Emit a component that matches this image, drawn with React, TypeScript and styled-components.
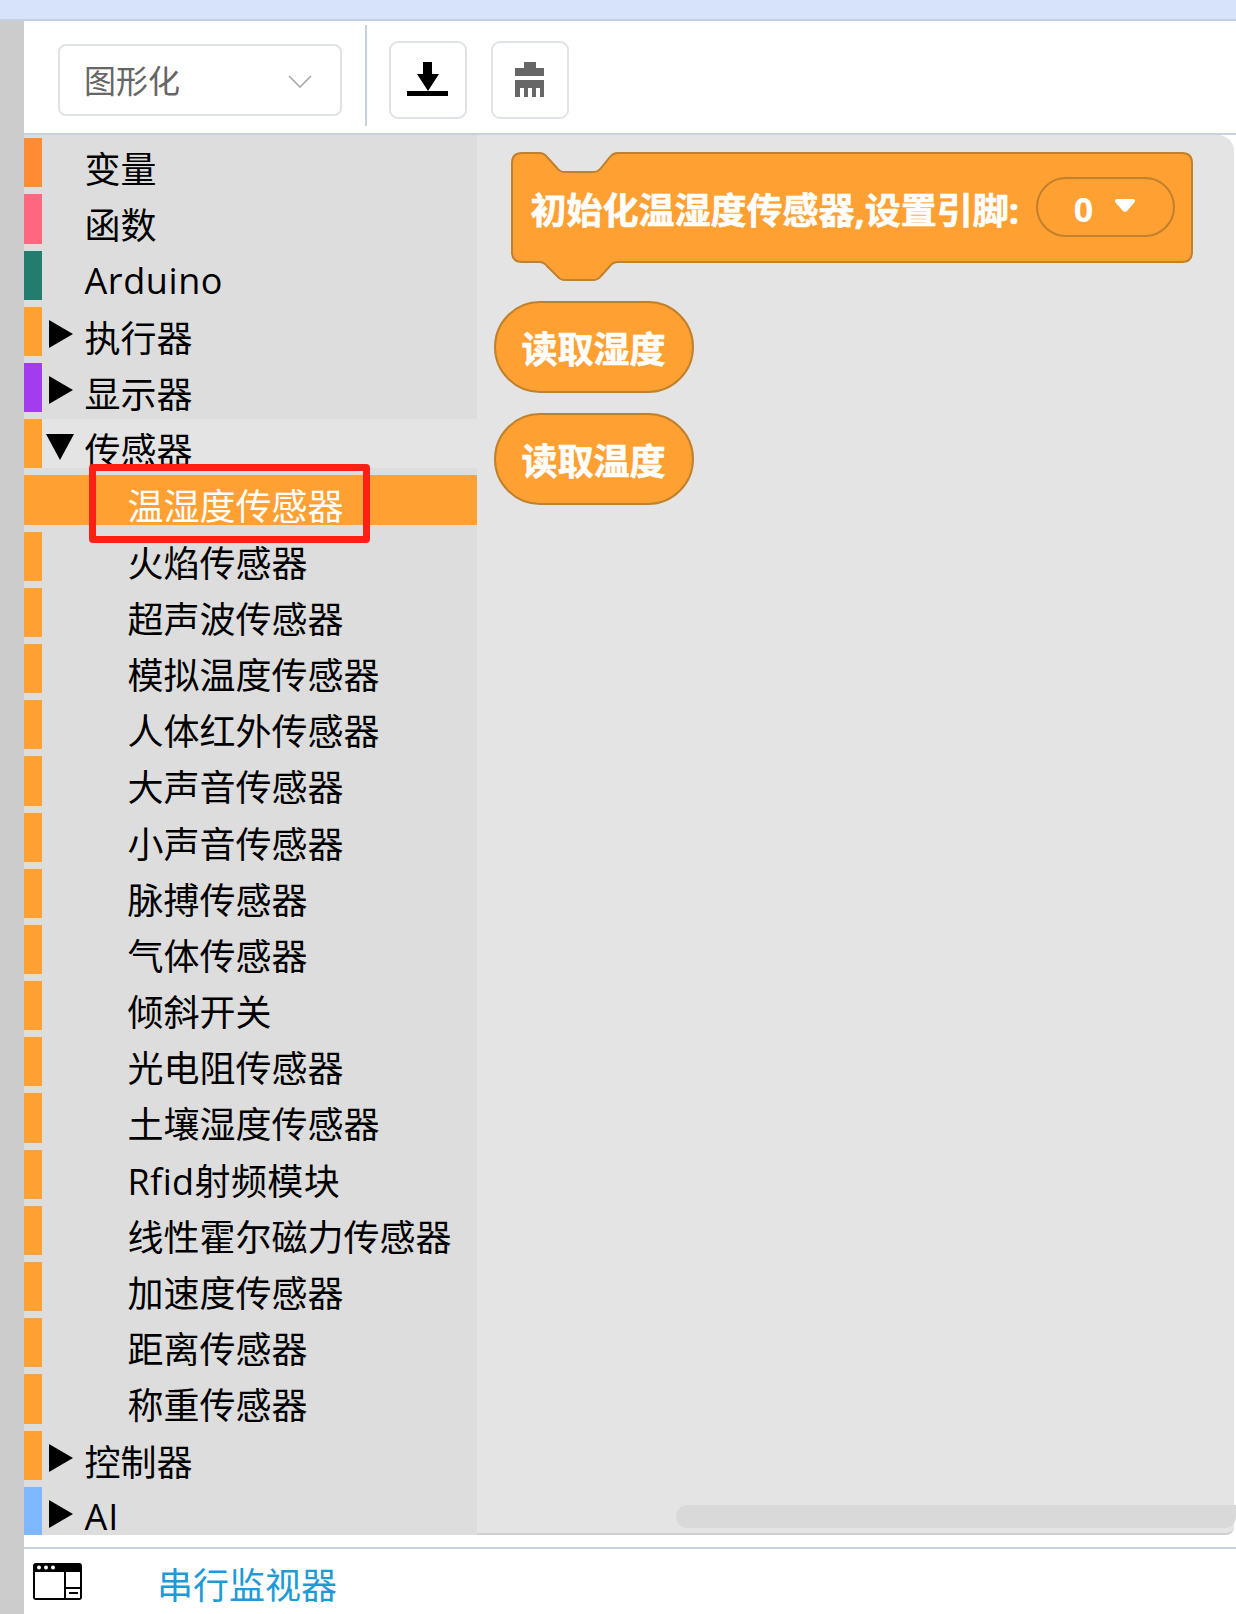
import React from 'react';
import styled, { createGlobalStyle } from 'styled-components';

const GlobalStyle = createGlobalStyle`
  html, body {
    margin: 0;
    padding: 0;
    background: white;
    font-family: 'Open Sans', 'Noto Sans CJK SC', sans-serif;
  }
`;

const palette = {
  control: '#ffa033',
  variable: '#ff8c33',
  func: '#ff6680',
  arduino: '#237d6e',
  display: '#a33cf0',
  ai: '#80b8ff',
  blockBorder: '#c1802c',
};

const Page = styled.div`
  width: 1236px;
  height: 1614px;
  display: flex;
  flex-direction: column;
  overflow: hidden;
`;

const TopBand = styled.div`
  height: 19px;
  flex: none;
  background: #d6e3fa;
  border-bottom: 2px solid #c5d1e2;
`;

const Body = styled.div`
  flex: 1;
  display: flex;
  min-height: 0;
`;

const Gutter = styled.div`
  width: 24px;
  flex: none;
  background: #cccccc;
`;

const Main = styled.div`
  flex: 1;
  display: flex;
  flex-direction: column;
  min-width: 0;
`;

const Toolbar = styled.div`
  height: 112px;
  flex: none;
  display: flex;
  align-items: flex-start;
  background: white;
  border-bottom: 2px solid #c8d2dc;
`;

const Select = styled.div`
  width: 284px;
  height: 72px;
  margin: 23px 0 0 34px;
  padding: 0 28px 0 24px;
  box-sizing: border-box;
  display: flex;
  align-items: center;
  justify-content: space-between;
  border: 2px solid #dfe3e8;
  border-radius: 8px;
  color: #666;
  font-size: 32px;
  line-height: 68px;
`;

const SelectLabel = styled.span`
  margin-top: 2px;
`;

const Divider = styled.div`
  width: 2px;
  height: 101px;
  margin: 4px 22px 0 23px;
  background: #c8d2dc;
`;

const ToolButton = styled.div`
  width: 78px;
  height: 78px;
  margin: 20px 24px 0 0;
  box-sizing: border-box;
  display: flex;
  align-items: center;
  justify-content: center;
  border: 2px solid #dfe3e8;
  border-radius: 9px;
`;

const Content = styled.div`
  height: 1400px;
  flex: none;
  display: flex;
`;

const Sidebar = styled.div`
  width: 453px;
  flex: none;
  padding-top: 3.3px;
  box-sizing: border-box;
  background: #dddddd;
  overflow: hidden;
  position: relative;
`;

const Row = styled.div<{ $bg?: string; $color?: string }>`
  height: 49.2px;
  margin-bottom: 7px;
  display: flex;
  position: relative;
  background: ${(p) => p.$bg || 'transparent'};
  color: ${(p) => p.$color || 'black'};
  font-size: 36px;
  line-height: 49px;
`;

const Strip = styled.div<{ $color: string }>`
  width: 18px;
  flex: none;
  background: ${(p) => p.$color};
`;

const Toggle = styled.div`
  width: 43px;
  flex: none;
  display: flex;
  align-items: flex-start;
  padding: 13px 0 0 6px;
  box-sizing: border-box;
`;

const Label = styled.div<{ $indent: boolean; $spacing?: number; $latin?: boolean }>`
  margin-left: ${(p) => (p.$indent ? '42.5px' : '-0.5px')};
  padding-top: ${(p) => (p.$latin ? 5 : 7)}px;
  white-space: nowrap;
  letter-spacing: ${(p) => p.$spacing || 0}px;
`;

const Highlight = styled.div`
  position: absolute;
  left: 65px;
  top: 329px;
  width: 281px;
  height: 79px;
  box-sizing: border-box;
  border: 7px solid #ff2015;
  border-radius: 4px;
`;

const Workspace = styled.div`
  flex: 1;
  position: relative;
  margin-right: 2px;
  padding: 17px 0 0 16.5px;
  box-sizing: border-box;
  display: flex;
  flex-direction: column;
  align-items: flex-start;
  background: #e4e4e4;
  border-bottom: 2px solid #cfcfcf;
  border-radius: 0 16px 8px 0;
  overflow: visible;
`;

const StackBlock = styled.div`
  position: relative;
  width: 683px;
  height: 130px;
  margin: 0 0 19px 17px;
  flex: none;
`;

const BlockShape = styled.svg`
  position: absolute;
  left: 0;
  top: 0;
`;

const BlockContent = styled.div`
  position: relative;
  height: 110px;
  padding: 0 0 0 20px;
  box-sizing: border-box;
  display: flex;
  align-items: center;
  gap: 17px;
`;

const BlockText = styled.div`
  color: white;
  font-weight: 700;
  font-size: 36px;
  white-space: nowrap;
  -webkit-text-stroke: 0.6px white;
`;

const StackText = styled(BlockText)`
  margin-top: 2px;
`;

const Field = styled.div`
  width: 139px;
  height: 60px;
  box-sizing: border-box;
  display: flex;
  align-items: center;
  justify-content: center;
  gap: 20px;
  border: 2px solid ${palette.blockBorder};
  border-radius: 30px;
  color: white;
  font-weight: 700;
  font-size: 34px;
  font-family: 'Open Sans', sans-serif;
`;

const FieldValue = styled.span`
  margin-top: 4px;
`;

const FieldCaret = styled.svg`
  margin-top: -4px;
`;

const Reporter = styled.div`
  width: 200px;
  height: 92px;
  flex: none;
  box-sizing: border-box;
  display: flex;
  align-items: center;
  justify-content: center;
  background: ${palette.control};
  border: 2px solid ${palette.blockBorder};
  border-radius: 46px;
  margin-bottom: 20px;
`;

const ScrollThumb = styled.div`
  position: absolute;
  left: 199px;
  right: -2px;
  top: 1370px;
  height: 23px;
  background: #d9d9d9;
  border-radius: 11px 0 11px 11px;
`;

const Spacer = styled.div`
  height: 12px;
  flex: none;
`;

const Footer = styled.div`
  flex: 1;
  display: flex;
  align-items: center;
  padding: 0 0 0 9px;
  background: white;
  border-top: 2px solid #c8d2dc;
`;

const FooterLabel = styled.div`
  margin-left: 75px;
  padding-top: 4px;
  color: #1e9bd7;
  font-size: 36px;
  white-space: nowrap;
`;

const RightArrow = () => (
  <svg width="26" height="28" viewBox="0 0 26 28">
    <polygon points="1,0 25,14 1,28" fill="black" />
  </svg>
);

const DownArrow = () => (
  <svg width="28" height="26" viewBox="0 0 28 26" style={{ marginLeft: -2, marginTop: 2 }}>
    <polygon points="0,0 28,0 14,26" fill="black" />
  </svg>
);

const Chevron = () => (
  <svg width="24" height="14" viewBox="0 0 24 14" style={{ marginTop: 4 }}>
    <path d="M1 1 L12 12 L23 1" fill="none" stroke="#aaaaaa" strokeWidth="1.6" />
  </svg>
);

const DownloadIcon = () => (
  <svg width="42" height="36" viewBox="0 0 42 36">
    <path d="M16 0 H25 V12 H32 L21 29 L10 12 H16 Z" fill="black" />
    <rect x="0" y="29" width="41" height="5" fill="black" />
  </svg>
);

const BrushIcon = () => (
  <svg width="30" height="36" viewBox="0 0 30 36">
    <path d="M9 0 H21 V6 H29 V14 H0 V6 H9 Z" fill="#666" />
    <path d="M0 18 H29 V35 H25 V26 H21 V35 H17 V26 H13 V35 H9 V26 H5 V35 H0 Z" fill="#666" />
  </svg>
);

const MonitorIcon = () => (
  <svg width="49" height="37" viewBox="0 0 49 37">
    <rect x="0" y="0" width="49" height="37" rx="3" fill="black" />
    <circle cx="6" cy="4.5" r="2" fill="white" />
    <circle cx="13" cy="4.5" r="2" fill="white" />
    <circle cx="20" cy="4.5" r="2" fill="white" />
    <rect x="2" y="9" width="29" height="26" fill="white" />
    <rect x="33" y="9" width="14" height="15" fill="white" />
    <rect x="33" y="26" width="14" height="9" fill="white" />
    <rect x="36" y="29" width="9" height="2" fill="black" />
  </svg>
);

const StackShape = () => (
  <BlockShape width="683" height="130" viewBox="0 0 683 130">
    <path
      d="M1 11 Q1 1 11 1 H28 Q33 1 36 5 L46 16 Q49 20 54 20 H82 Q87 20 90 16 L99 5 Q102 1 107 1 H671 Q681 1 681 11 V100 Q681 110 671 110 H107 Q102 110 99 114 L90 124 Q87 128 82 128 H54 Q49 128 46 124 L36 114 Q33 110 28 110 H11 Q1 110 1 100 Z"
      fill={palette.control}
      stroke={palette.blockBorder}
      strokeWidth="2"
    />
  </BlockShape>
);

const FieldArrow = () => (
  <FieldCaret width="24" height="15" viewBox="0 0 24 15">
    <path d="M5 1 H19 Q24 1 21 5 L14 13 Q12 15 10 13 L3 5 Q0 1 5 1 Z" fill="white" />
  </FieldCaret>
);

type Item = {
  name: string;
  color: string;
  arrow?: 'right' | 'down';
  child?: boolean;
  open?: boolean;
  selected?: boolean;
  spacing?: number;
  latin?: boolean;
};

const sensors = [
  '温湿度传感器',
  '火焰传感器',
  '超声波传感器',
  '模拟温度传感器',
  '人体红外传感器',
  '大声音传感器',
  '小声音传感器',
  '脉搏传感器',
  '气体传感器',
  '倾斜开关',
  '光电阻传感器',
  '土壤湿度传感器',
  'Rfid射频模块',
  '线性霍尔磁力传感器',
  '加速度传感器',
  '距离传感器',
  '称重传感器',
];

const items: Item[] = [
  { name: '变量', color: palette.variable },
  { name: '函数', color: palette.func },
  { name: 'Arduino', color: palette.arduino, spacing: 0.6, latin: true },
  { name: '执行器', color: palette.control, arrow: 'right' },
  { name: '显示器', color: palette.display, arrow: 'right' },
  { name: '传感器', color: palette.control, arrow: 'down', open: true },
  ...sensors.map((name, i) => ({
    name,
    color: palette.control,
    child: true,
    selected: i === 0,
    spacing: name.startsWith('Rfid') ? 0.4 : 0,
  })),
  { name: '控制器', color: palette.control, arrow: 'right' },
  { name: 'AI', color: palette.ai, arrow: 'right', spacing: 1, latin: true },
];

const rowBg = (item: Item) => {
  if (item.selected) return palette.control;
  if (item.open) return '#e4e4e4';
  return undefined;
};

const App = () => {
  return (
    <Page>
      <GlobalStyle />
      <TopBand />
      <Body>
        <Gutter />
        <Main>
          <Toolbar>
            <Select>
              <SelectLabel>图形化</SelectLabel>
              <Chevron />
            </Select>
            <Divider />
            <ToolButton>
              <DownloadIcon />
            </ToolButton>
            <ToolButton>
              <BrushIcon />
            </ToolButton>
          </Toolbar>
          <Content>
            <Sidebar>
              {items.map((item) => (
                <Row key={item.name} $bg={rowBg(item)} $color={item.selected ? 'white' : 'black'}>
                  <Strip $color={item.color} />
                  <Toggle>
                    {item.arrow === 'right' && <RightArrow />}
                    {item.arrow === 'down' && <DownArrow />}
                  </Toggle>
                  <Label $indent={!!item.child} $spacing={item.spacing} $latin={item.latin}>
                    {item.name}
                  </Label>
                </Row>
              ))}
              <Highlight />
            </Sidebar>
            <Workspace>
              <StackBlock>
                <StackShape />
                <BlockContent>
                  <StackText>初始化温湿度传感器,设置引脚:</StackText>
                  <Field>
                    <FieldValue>0</FieldValue>
                    <FieldArrow />
                  </Field>
                </BlockContent>
              </StackBlock>
              <Reporter>
                <BlockText>读取湿度</BlockText>
              </Reporter>
              <Reporter>
                <BlockText>读取温度</BlockText>
              </Reporter>
              <ScrollThumb />
            </Workspace>
          </Content>
          <Spacer />
          <Footer>
            <MonitorIcon />
            <FooterLabel>串行监视器</FooterLabel>
          </Footer>
        </Main>
      </Body>
    </Page>
  );
};

export default App;
